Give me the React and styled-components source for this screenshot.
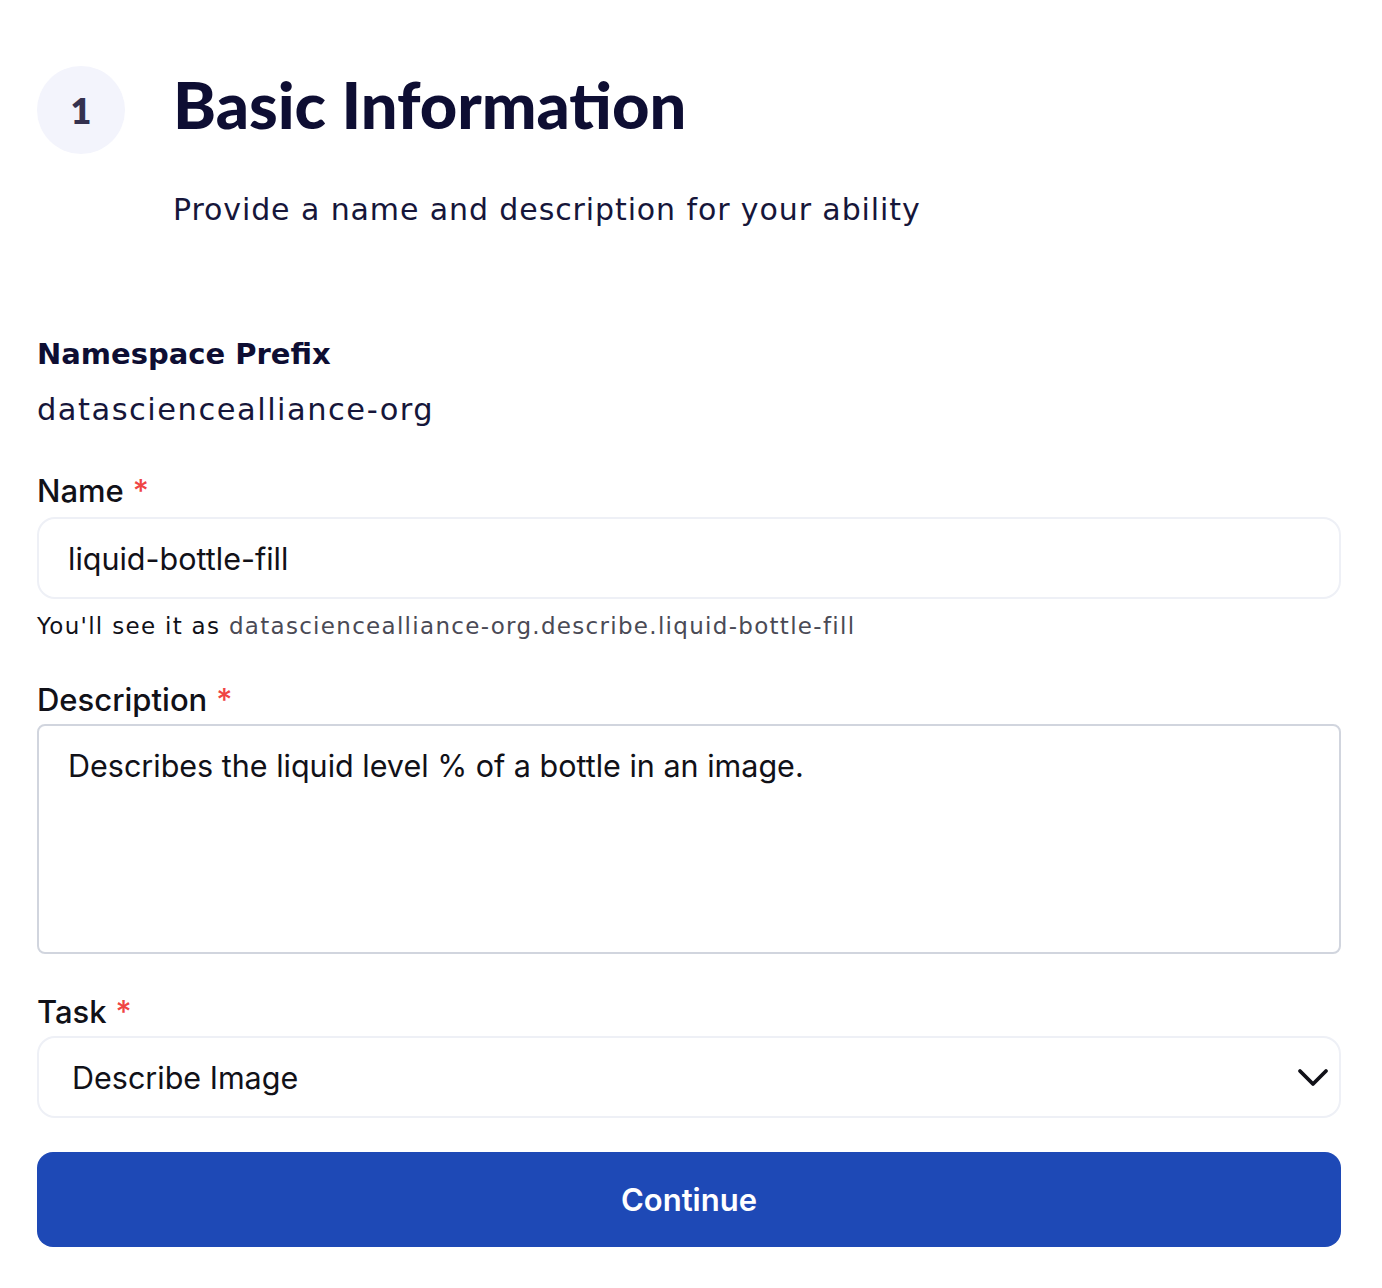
import React from "react";
import styled, { createGlobalStyle } from "styled-components";

const Global = createGlobalStyle`
  body {
    margin: 0;
    background: #ffffff;
    font-family: "DejaVu Sans", "Open Sans", sans-serif;
  }
`;

const Page = styled.div`
  padding: 66px 41px 40px 37px;
  display: flex;
  flex-direction: column;
`;

const StepHeader = styled.div`
  display: grid;
  grid-template-columns: 88px 1fr;
  column-gap: 48px;
  row-gap: 36px;
`;

const StepBadge = styled.div`
  width: 88px;
  height: 88px;
  border-radius: 50%;
  background: #f3f4fc;
  color: #34314f;
  font-family: "Lato", sans-serif;
  font-weight: 800;
  font-size: 36px;
  display: flex;
  align-items: center;
  justify-content: center;
`;

const Title = styled.h1`
  margin: 0;
  font-family: "Lato", sans-serif;
  font-weight: 900;
  font-size: 65px;
  color: #0e0e33;
  line-height: 76px;
`;

const Subtitle = styled.p`
  grid-column: 2;
  margin: 0;
  font-family: "DejaVu Sans", sans-serif;
  font-size: 30px;
  letter-spacing: 0.9px;
  color: #16163a;
  line-height: 40px;
`;

const Section = styled.div`
  display: flex;
  flex-direction: column;
  margin-top: ${({ $top }) => $top}px;
`;

const PrefixLabel = styled.div`
  font-family: "DejaVu Sans", sans-serif;
  font-weight: 700;
  font-size: 29px;
  color: #0e0e33;
  line-height: 40px;
`;

const PrefixValue = styled.div`
  font-family: "DejaVu Sans", sans-serif;
  font-size: 30.5px;
  letter-spacing: 1.5px;
  color: #16163a;
  line-height: 40px;
  margin-top: 16px;
`;

const Label = styled.label`
  font-family: "Inter", sans-serif;
  font-weight: 500;
  font-size: 31px;
  color: #111118;
  line-height: 40px;
  margin-bottom: ${({ $gap }) => $gap}px;
`;

const Star = styled.span`
  color: #ef4444;
  margin-left: 9px;
`;

const Field = styled.div`
  height: 82px;
  box-sizing: border-box;
  border: 2px solid #eef0f6;
  border-radius: 18px;
  display: flex;
  align-items: center;
  justify-content: space-between;
  padding: 0 9px 0 ${({ $pad }) => $pad}px;
  font-family: "Inter", sans-serif;
  font-size: 30.5px;
  color: #111118;
`;

const Hint = styled.div`
  margin-top: 12px;
  font-family: "DejaVu Sans", sans-serif;
  font-size: 23px;
  letter-spacing: 1.3px;
  color: #111118;
  line-height: 30px;
`;

const HintValue = styled.span`
  color: #4a4a55;
`;

const TextArea = styled.div`
  height: 230px;
  box-sizing: border-box;
  border: 2px solid #d1d5de;
  border-radius: 8px;
  padding: 20px 29px;
  font-family: "Inter", sans-serif;
  font-size: 30.5px;
  color: #111118;
  line-height: 40px;
`;

const Button = styled.button`
  margin-top: 34px;
  height: 95px;
  border: none;
  border-radius: 16px;
  background: #1e49b6;
  color: #ffffff;
  font-family: "Inter", sans-serif;
  font-weight: 600;
  font-size: 31px;
`;

export default function App() {
  return (
    <>
      <Global />
      <Page>
        <StepHeader>
          <StepBadge>1</StepBadge>
          <Title>Basic Information</Title>
          <Subtitle>Provide a name and description for your ability</Subtitle>
        </StepHeader>

        <Section $top={104}>
          <PrefixLabel>Namespace Prefix</PrefixLabel>
          <PrefixValue>datasciencealliance-org</PrefixValue>
        </Section>

        <Section $top={41}>
          <Label $gap={6}>
            Name<Star>*</Star>
          </Label>
          <Field $pad={29}>liquid-bottle-fill</Field>
          <Hint>
            You'll see it as <HintValue>datasciencealliance-org.describe.liquid-bottle-fill</HintValue>
          </Hint>
        </Section>

        <Section $top={39}>
          <Label $gap={4}>
            Description<Star>*</Star>
          </Label>
          <TextArea>Describes the liquid level % of a bottle in an image.</TextArea>
        </Section>

        <Section $top={38}>
          <Label $gap={4}>
            Task<Star>*</Star>
          </Label>
          <Field $pad={33}>
            Describe Image
            <svg width="34" height="22" viewBox="0 0 34 22" fill="none" stroke="#111118" strokeWidth="3.8" strokeLinecap="round" strokeLinejoin="round">
              <path d="M4 5l13 13 13-13" />
            </svg>
          </Field>
          <Button>Continue</Button>
        </Section>
      </Page>
    </>
  );
}
